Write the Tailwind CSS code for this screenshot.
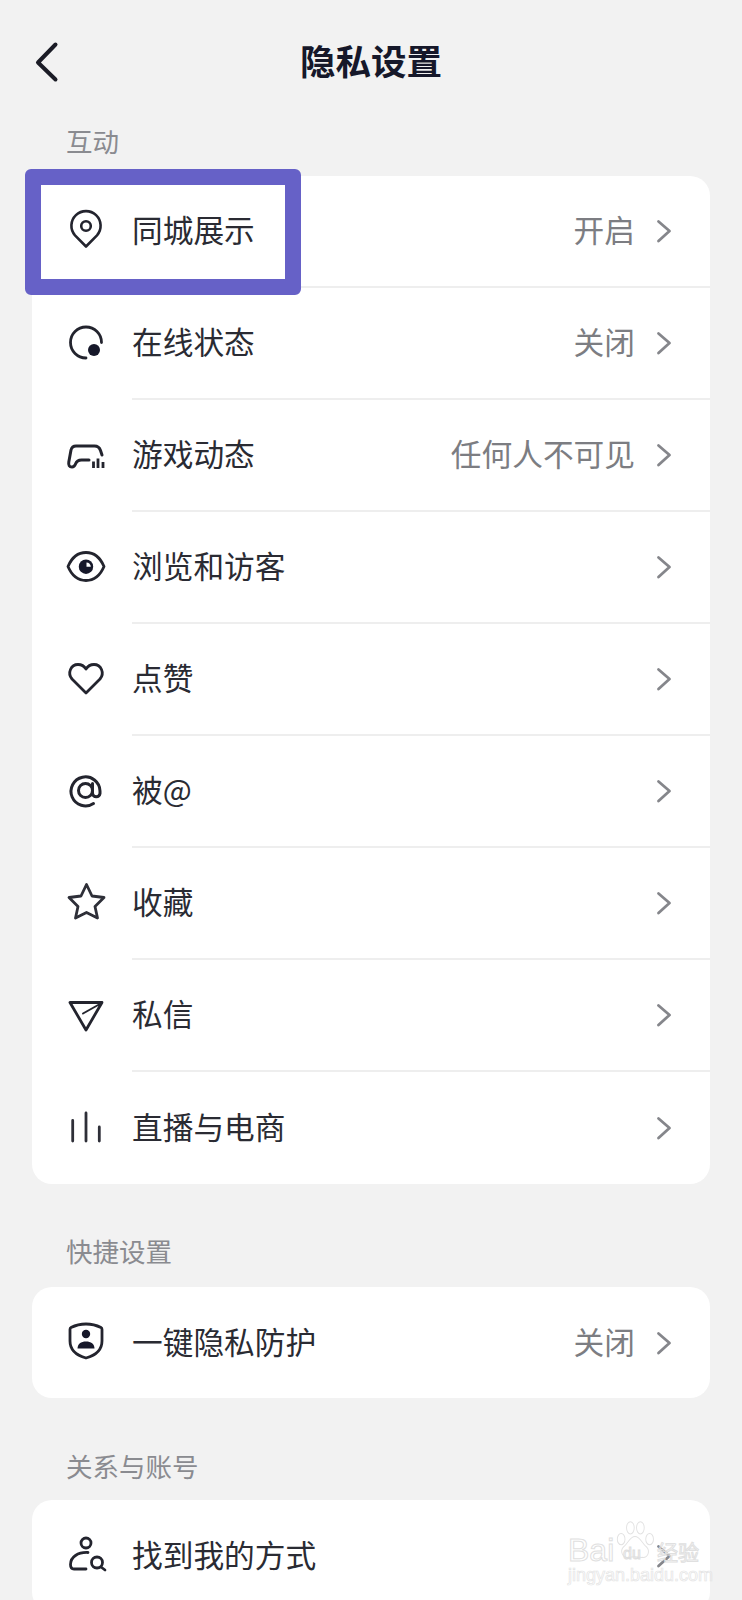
<!DOCTYPE html>
<html lang="zh-CN">
<head>
  <meta charset="UTF-8" />
  <title>隐私设置</title>
  <meta name="viewport" content="width=device-width, initial-scale=1.0" />
  <script src="https://cdn.jsdelivr.net/npm/@tailwindcss/browser@4"></script>
</head>
<body class="relative h-[1600px] w-[742px] overflow-hidden bg-[#f2f2f2] font-['Noto_Sans_CJK_SC','Noto_Sans',sans-serif] text-[#2a2b33]">

  <!-- header -->
  <header class="grid h-[124px] grid-cols-[1fr_auto_1fr] items-center">
    <button class="pl-[34px]" aria-label="返回">
      <svg class="h-[44px] w-[28px]" viewBox="0 0 28 44" fill="none" stroke="#1b1c26" stroke-width="4" stroke-linecap="round" stroke-linejoin="round"><path d="M21.500 4.500 4 22.500l17.500 17"/></svg>
    </button>
    <h1 class="pb-[5px] text-[35.5px] font-bold leading-none text-[#16182a]">隐私设置</h1>
    <div></div>
  </header>

  <!-- 互动 -->
  <h2 class="mb-[16px] flex h-[36px] items-center pb-[2px] pl-[66px] text-[26.5px] text-[#8a8b90]">互动</h2>
  <section class="mx-[32px] w-[678px] overflow-hidden rounded-[20px] bg-white">

    <div class="flex h-[112px]">
      <svg class="ml-[30px] mr-[22px] h-[48px] w-[48px] shrink-0 self-center" viewBox="0 0 48 48" fill="none" stroke="#23242e" stroke-width="2.6" stroke-linecap="round" stroke-linejoin="round"><path d="M24 38.500 13 27.300a14.600 14.600 0 1 1 22 0z"/><circle cx="24" cy="18" r="4.800"/></svg>
      <div class="flex flex-1 items-center border-b-2 border-[#eeeeee] pr-[38px]">
        <span class="mb-[3px] flex-1 text-[30.7px]">同城展示</span>
        <span class="mb-[3px] mr-[21px] text-[30.7px] text-[#7c7d82]">开启</span>
        <svg class="h-[24px] w-[16px]" viewBox="0 0 16 24" fill="none" stroke="#85868b" stroke-width="2.8" stroke-linecap="round" stroke-linejoin="round"><path d="m2.500 2.500 11 9.500-11 10"/></svg>
      </div>
    </div>

    <div class="flex h-[112px]">
      <svg class="ml-[30px] mr-[22px] h-[48px] w-[48px] shrink-0 self-center" viewBox="0 0 48 48" fill="none" stroke="#23242e" stroke-width="2.800" stroke-linecap="round" stroke-linejoin="round"><path d="M24 38A15.500 15.500 0 1 1 39.500 22.500"/><circle cx="32" cy="30" r="6" fill="#16182a" stroke="none"/></svg>
      <div class="flex flex-1 items-center border-b-2 border-[#eeeeee] pr-[38px]">
        <span class="mb-[3px] flex-1 text-[30.7px]">在线状态</span>
        <span class="mb-[3px] mr-[21px] text-[30.7px] text-[#7c7d82]">关闭</span>
        <svg class="h-[24px] w-[16px]" viewBox="0 0 16 24" fill="none" stroke="#85868b" stroke-width="2.8" stroke-linecap="round" stroke-linejoin="round"><path d="m2.500 2.500 11 9.500-11 10"/></svg>
      </div>
    </div>

    <div class="flex h-[112px]">
      <svg class="ml-[30px] mr-[22px] h-[48px] w-[48px] shrink-0 self-center" viewBox="0 0 48 48" fill="none" stroke="#23242e" stroke-width="3" stroke-linecap="round" stroke-linejoin="round"><path d="M40 23 38.500 18.500Q37 14 32.500 14H14Q10 14 9 18L6.800 30Q6 35 10 35 12.300 35 13.500 32 15 28 19.500 28H27"/><path d="M31.500 29.500V36M36 26.500V36M41 30V36" stroke-width="2.800" stroke-linecap="butt"/></svg>
      <div class="flex flex-1 items-center border-b-2 border-[#eeeeee] pr-[38px]">
        <span class="mb-[3px] flex-1 text-[30.7px]">游戏动态</span>
        <span class="mb-[3px] mr-[21px] text-[30.7px] text-[#7c7d82]">任何人不可见</span>
        <svg class="h-[24px] w-[16px]" viewBox="0 0 16 24" fill="none" stroke="#85868b" stroke-width="2.8" stroke-linecap="round" stroke-linejoin="round"><path d="m2.500 2.500 11 9.500-11 10"/></svg>
      </div>
    </div>

    <div class="flex h-[112px]">
      <svg class="ml-[30px] mr-[22px] h-[48px] w-[48px] shrink-0 self-center" viewBox="0 0 48 48" fill="none" stroke="#23242e" stroke-width="2.800" stroke-linecap="round" stroke-linejoin="round"><path d="M6 22.500C10 13 17 8.500 24 8.500S38 13 42 22.500C38 32 31 36.500 24 36.500S10 32 6 22.500z"/><circle cx="24" cy="22.700" r="7.200" fill="#16182a" stroke="none"/><path d="M24.500 18.500v4.300h4.300a4.300 4.300 0 0 0-4.300-4.300z" fill="#fff" stroke="none"/></svg>
      <div class="flex flex-1 items-center border-b-2 border-[#eeeeee] pr-[38px]">
        <span class="mb-[3px] flex-1 text-[30.7px]">浏览和访客</span>
        <svg class="h-[24px] w-[16px]" viewBox="0 0 16 24" fill="none" stroke="#85868b" stroke-width="2.8" stroke-linecap="round" stroke-linejoin="round"><path d="m2.500 2.500 11 9.500-11 10"/></svg>
      </div>
    </div>

    <div class="flex h-[112px]">
      <svg class="ml-[30px] mr-[22px] h-[48px] w-[48px] shrink-0 self-center" viewBox="0 0 48 48" fill="none" stroke="#23242e" stroke-width="2.800" stroke-linecap="round" stroke-linejoin="round"><path d="M24 37 10 23C5 17 9 8.500 16 8.500c4 0 6.500 2 8 4.500 1.500-2.500 4-4.500 8-4.500 7 0 11 8.500 6 14.500z"/></svg>
      <div class="flex flex-1 items-center border-b-2 border-[#eeeeee] pr-[38px]">
        <span class="mb-[3px] flex-1 text-[30.7px]">点赞</span>
        <svg class="h-[24px] w-[16px]" viewBox="0 0 16 24" fill="none" stroke="#85868b" stroke-width="2.8" stroke-linecap="round" stroke-linejoin="round"><path d="m2.500 2.500 11 9.500-11 10"/></svg>
      </div>
    </div>

    <div class="flex h-[112px]">
      <svg class="ml-[30px] mr-[22px] h-[48px] w-[48px] shrink-0 self-center" viewBox="0 0 48 48" fill="none" stroke="#23242e" stroke-width="3" stroke-linecap="round" stroke-linejoin="round"><circle cx="23.500" cy="22.500" r="7"/><path d="M30.500 15.500v10a3.800 3.800 0 0 0 7.500 0V23A14.500 14.500 0 1 0 31.500 35.500"/></svg>
      <div class="flex flex-1 items-center border-b-2 border-[#eeeeee] pr-[38px]">
        <span class="mb-[3px] flex-1 text-[30.7px]">被@</span>
        <svg class="h-[24px] w-[16px]" viewBox="0 0 16 24" fill="none" stroke="#85868b" stroke-width="2.8" stroke-linecap="round" stroke-linejoin="round"><path d="m2.500 2.500 11 9.500-11 10"/></svg>
      </div>
    </div>

    <div class="flex h-[112px]">
      <svg class="ml-[30px] mr-[22px] h-[48px] w-[48px] shrink-0 self-center" viewBox="0 0 48 48" fill="none" stroke="#2e2f38" stroke-width="2.800" stroke-linecap="round" stroke-linejoin="round"><path d="M24.500 4.500 30 16l12 1.500-9 9 2.500 11.500-11-5.500L13.500 38 16 26.500l-9-9L19 16z"/></svg>
      <div class="flex flex-1 items-center border-b-2 border-[#eeeeee] pr-[38px]">
        <span class="mb-[3px] flex-1 text-[30.7px]">收藏</span>
        <svg class="h-[24px] w-[16px]" viewBox="0 0 16 24" fill="none" stroke="#85868b" stroke-width="2.8" stroke-linecap="round" stroke-linejoin="round"><path d="m2.500 2.500 11 9.500-11 10"/></svg>
      </div>
    </div>

    <div class="flex h-[112px]">
      <svg class="ml-[30px] mr-[22px] h-[48px] w-[48px] shrink-0 self-center" viewBox="0 0 48 48" fill="none" stroke="#23242e" stroke-width="2.800" stroke-linecap="round" stroke-linejoin="round"><path d="M8 10.500h32L24 38z"/><path d="M37 12.500 21 21.500" stroke-width="2"/></svg>
      <div class="flex flex-1 items-center border-b-2 border-[#eeeeee] pr-[38px]">
        <span class="mb-[3px] flex-1 text-[30.7px]">私信</span>
        <svg class="h-[24px] w-[16px]" viewBox="0 0 16 24" fill="none" stroke="#85868b" stroke-width="2.8" stroke-linecap="round" stroke-linejoin="round"><path d="m2.500 2.500 11 9.500-11 10"/></svg>
      </div>
    </div>

    <div class="flex h-[112px]">
      <svg class="ml-[30px] mr-[22px] h-[48px] w-[48px] shrink-0 self-center" viewBox="0 0 48 48" fill="none" stroke="#2e2f38" stroke-width="2.800" stroke-linecap="round"><path d="M10.700 16.500V37M24 9v28M37.300 23v14"/></svg>
      <div class="flex flex-1 items-center pr-[38px]">
        <span class="mb-[3px] flex-1 text-[30.7px]">直播与电商</span>
        <svg class="h-[24px] w-[16px]" viewBox="0 0 16 24" fill="none" stroke="#85868b" stroke-width="2.8" stroke-linecap="round" stroke-linejoin="round"><path d="m2.500 2.500 11 9.500-11 10"/></svg>
      </div>
    </div>
  </section>

  <!-- 快捷设置 -->
  <h2 class="mb-[17px] mt-[50px] flex h-[36px] items-center pb-[2px] pl-[66px] text-[26.5px] text-[#8a8b90]">快捷设置</h2>
  <section class="mx-[32px] w-[678px] overflow-hidden rounded-[20px] bg-white">
    <div class="flex h-[111px]">
      <svg class="ml-[30px] mr-[22px] h-[48px] w-[48px] shrink-0 self-center" viewBox="0 0 48 48" fill="none" stroke="#23242e" stroke-width="2.800" stroke-linecap="round" stroke-linejoin="round"><path d="M24 5c5.500 0 11 1.500 15 3.500q1 .5 1 2V22c0 9-7 14.500-16 17C15 36.500 8 31 8 22V10.500q0-1.500 1-2C13 6.500 18.500 5 24 5z"/><circle cx="24" cy="15" r="4.200" fill="#16182a" stroke="none"/><path d="M15.500 29.500c0-4.500 3.500-7 8.500-7s8.500 2.500 8.500 7z" fill="#16182a" stroke="none"/></svg>
      <div class="flex flex-1 items-center pr-[38px]">
        <span class="mb-[3px] flex-1 text-[30.7px]">一键隐私防护</span>
        <span class="mb-[3px] mr-[21px] text-[30.7px] text-[#7c7d82]">关闭</span>
        <svg class="h-[24px] w-[16px]" viewBox="0 0 16 24" fill="none" stroke="#85868b" stroke-width="2.8" stroke-linecap="round" stroke-linejoin="round"><path d="m2.500 2.500 11 9.500-11 10"/></svg>
      </div>
    </div>
  </section>

  <!-- 关系与账号 -->
  <h2 class="mb-[15px] mt-[51px] flex h-[36px] items-center pb-[3px] pl-[66px] text-[26.5px] text-[#8a8b90]">关系与账号</h2>
  <section class="mx-[32px] w-[678px] overflow-hidden rounded-[20px] bg-white">
    <div class="flex h-[112px]">
      <svg class="ml-[30px] mr-[22px] h-[48px] w-[48px] shrink-0 self-center" viewBox="0 0 48 48" fill="none" stroke="#23242e" stroke-width="2.800" stroke-linecap="round" stroke-linejoin="round"><circle cx="24" cy="11" r="5"/><path d="M26 20.500C16 20 8.500 25 8.500 32.500q0 4.500 3.500 4.500h12"/><circle cx="35" cy="30.500" r="5.500"/><path d="m39 35 4 3"/></svg>
      <div class="flex flex-1 items-center pr-[38px]">
        <span class="mb-[3px] flex-1 text-[30.7px]">找到我的方式</span>
        <svg class="h-[24px] w-[16px]" viewBox="0 0 16 24" fill="none" stroke="#85868b" stroke-width="2.8" stroke-linecap="round" stroke-linejoin="round"><path d="m2.500 2.500 11 9.500-11 10"/></svg>
      </div>
    </div>
  </section>

  <!-- highlight frame -->
  <div class="absolute left-[25px] top-[169px] h-[126px] w-[276px] rounded-[6px] border-[16px] border-[#6661c7]"></div>

  <!-- watermark -->
  <div class="absolute left-[568px] top-[1518px] h-[68px] w-[134px] text-transparent">
    <svg class="absolute left-[47px] top-[2px] h-[40px] w-[40px]" viewBox="0 0 52 46" preserveAspectRatio="none" fill="#fff" fill-opacity="0.7" stroke="#e2e2e2" stroke-width="1.200"><ellipse cx="20" cy="9" rx="5" ry="7"/><ellipse cx="33" cy="9" rx="5" ry="7"/><ellipse cx="8" cy="22" rx="5" ry="6.500"/><ellipse cx="45" cy="22" rx="5" ry="6.500"/><path d="M26 19c-7 0-9 8-15 12-5 5-1 13 6 12 6-1 12-1 18 0 8 1 11-7 6-12-6-4-8-12-15-12z"/></svg>
    <span class="absolute left-0 top-[16px] font-['Liberation_Sans',sans-serif] text-[32px] leading-[32px] [-webkit-text-stroke:1px_#e0e0e0]">Bai</span>
    <span class="absolute left-[55px] top-[27px] font-['Liberation_Sans',sans-serif] text-[16px] leading-[18px] [-webkit-text-stroke:1px_#dedede]">du</span>
    <span class="absolute left-[89px] top-[21px] text-[21px] leading-[24px] [-webkit-text-stroke:1px_#e0e0e0]">经验</span>
    <span class="absolute left-0 top-[48px] whitespace-nowrap font-['Liberation_Sans',sans-serif] text-[18px] leading-[18px] [-webkit-text-stroke:0.7px_#e4e4e4]">jingyan.baidu.com</span>
  </div>
</body>
</html>
